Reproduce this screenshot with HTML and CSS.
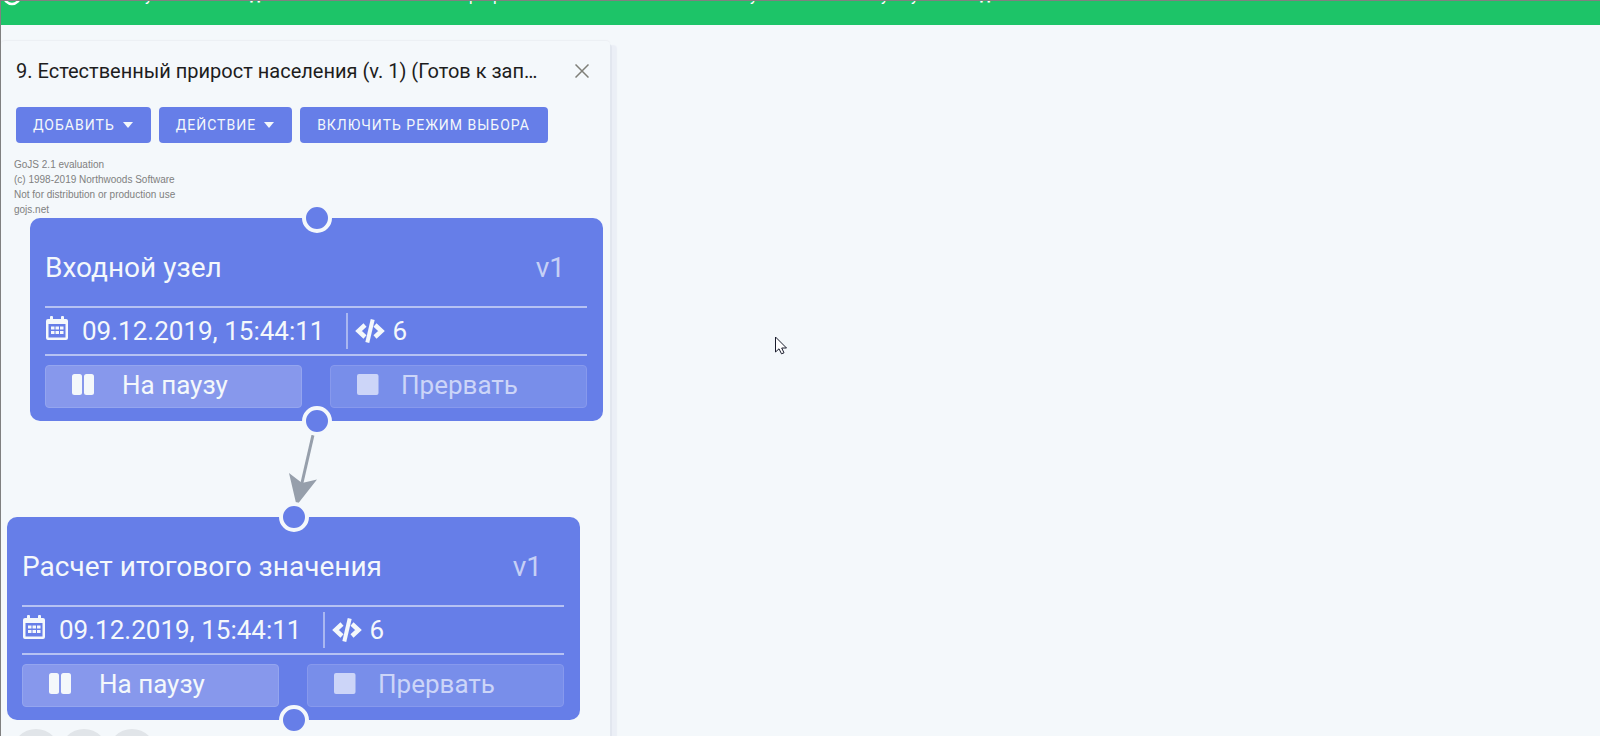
FILE: index.html
```html
<!DOCTYPE html>
<html lang="ru">
<head>
<meta charset="utf-8">
<title>9. Естественный прирост населения</title>
<link rel="stylesheet" href="styles.css">
</head>
<body>
<svg class="defs" width="0" height="0" aria-hidden="true">
  <symbol id="calendar" viewBox="0 0 22 24">
    <path fill="currentColor" fill-rule="evenodd" d="M4 1a1 1 0 0 1 1-1h1a1 1 0 0 1 1 1v2h8V1a1 1 0 0 1 1-1h1a1 1 0 0 1 1 1v2h2a2 2 0 0 1 2 2v17a2 2 0 0 1-2 2H2a2 2 0 0 1-2-2V5a2 2 0 0 1 2-2h2zM2.500 8v13.500h17V8z"/>
    <path fill="currentColor" d="M5 10.500h3.500v3H5zM9.500 10.500H13v3H9.500zM14 10.500h3.500v3H14zM5 15h3.500v3H5zM9.500 15H13v3H9.500zM14 15h3.500v3H14z"/>
  </symbol>
  <symbol id="code" viewBox="0 0 30 24">
    <path fill="none" stroke="currentColor" stroke-width="4.500" d="M10 6l-6.500 6 6.500 6M20 6l6.500 6-6.500 6"/>
    <path fill="none" stroke="currentColor" stroke-width="4" d="M17.700 .5l-5.400 23"/>
  </symbol>
  <symbol id="pause" viewBox="0 0 22 22">
    <rect width="10" height="21" rx="2.500" fill="currentColor"/><rect x="12" width="10" height="21" rx="2.500" fill="currentColor"/>
  </symbol>
  <symbol id="stop" viewBox="0 0 22 22">
    <rect width="21.500" height="21" rx="2" fill="currentColor"/>
  </symbol>
</svg>

<header class="notice">
  <svg class="notice-line" height="24">
    <circle cx="11" cy="-5" r="8" fill="none" stroke="#fff" stroke-width="2.500"/>
    <g>
      <text x="144" y="0">у</text><text x="249" y="-1" class="strong">д</text>
      <text x="464" y="0">ф</text><text x="492" y="0">р</text>
      <text x="749" y="0">у</text><text x="880" y="0">у</text><text x="910" y="0">у</text>
      <text x="979" y="-1" class="strong">д</text>
    </g>
  </svg>
</header>

<main class="workspace">
  <section class="panel">
    <div class="panel-head">
      <h1 class="panel-title">9. Естественный прирост населения (v. 1) (Готов к запуску)</h1>
      <button class="close" type="button" aria-label="×">
        <svg width="14" height="14" viewBox="0 0 14 14"><path d="M.5.5l13 13M13.500.5l-13 13" stroke="#7f7f78" stroke-width="1.500" fill="none"/></svg>
      </button>
    </div>
    <div class="toolbar">
      <button class="btn" type="button">ДОБАВИТЬ <span class="caret"></span></button>
      <button class="btn" type="button">ДЕЙСТВИЕ <span class="caret"></span></button>
      <button class="btn" type="button">ВКЛЮЧИТЬ РЕЖИМ ВЫБОРА</button>
    </div>

    <div class="diagram">
      <p class="watermark">GoJS 2.1 evaluation<br>(c) 1998-2019 Northwoods Software<br>Not for distribution or production use<br>gojs.net</p>

      <svg class="link" width="32" height="72" viewBox="0 0 32 72">
        <path d="M25 0L13.500 50" stroke="#969fab" stroke-width="3" fill="none"/>
        <path d="M1 38l13 10 15-3.500L10.500 68H8z" fill="#969fab"/>
      </svg>

      <article class="node node-input">
        <div class="node-head"><h2>Входной узел</h2><span class="version">v1</span></div>
        <div class="node-info">
          <svg class="ico-calendar"><use href="#calendar"/></svg><time class="date">09.12.2019, 15:44:11</time>
          <span class="count"><svg class="ico-code"><use href="#code"/></svg>6</span>
        </div>
        <div class="node-actions">
          <button class="action" type="button"><svg><use href="#pause"/></svg>На паузу</button>
          <button class="action" type="button" disabled><svg><use href="#stop"/></svg>Прервать</button>
        </div>
        <i class="port port-top"></i><i class="port port-bottom"></i>
      </article>

      <article class="node node-result">
        <div class="node-head"><h2>Расчет итогового значения</h2><span class="version">v1</span></div>
        <div class="node-info">
          <svg class="ico-calendar"><use href="#calendar"/></svg><time class="date">09.12.2019, 15:44:11</time>
          <span class="count"><svg class="ico-code"><use href="#code"/></svg>6</span>
        </div>
        <div class="node-actions">
          <button class="action" type="button"><svg><use href="#pause"/></svg>На паузу</button>
          <button class="action" type="button" disabled><svg><use href="#stop"/></svg>Прервать</button>
        </div>
        <i class="port port-top"></i><i class="port port-bottom"></i>
      </article>

      <div class="tools"><span></span><span></span><span></span></div>
    </div>
  </section>
</main>

<svg class="cursor" width="13" height="20" viewBox="0 0 13 20">
  <path d="M.5 1v15l3.500-3.200 2.500 5 2.500-1-2.300-4.800h4.800z" fill="#fff" stroke="#1a1c2c"/>
</svg>
</body>
</html>
```

FILE: styles.css
```css
* { box-sizing: border-box; }

body {
  margin: 0;
  height: 100vh;
  overflow: hidden;
  display: flex;
  flex-direction: column;
  border-top: 1px solid #808080;
  border-left: 1px solid #808080;
  background: #f4f8fb;
  color: #1d1d1d;
  font-family: Roboto, "Liberation Sans", sans-serif;
}

h1, h2, p { margin: 0; font-weight: 400; }
button { border: 0; padding: 0; font-family: inherit; }
.defs { position: absolute; }

.notice { flex: none; height: 24px; background: #1dc468; overflow: hidden; }
.notice-line { display: block; width: 100%; fill: #fff; font-size: 16px; }
.strong { font-weight: 700; }

.workspace { flex: 1; min-height: 0; display: flex; padding-top: 16px; }

.panel {
  width: 38.1%;
  min-width: 609px;
  display: flex;
  flex-direction: column;
  border-radius: 4px 4px 0 0;
  background: #f4f8fb;
  box-shadow: 0 -1px 1px #eceff3, 2px 3px 0 #e2e6ef, 7px 4px 1px #ebeff6;
}

.panel-head {
  display: flex;
  align-items: center;
  justify-content: space-between;
  gap: 32px;
  height: 60px;
  padding: 0 21px 0 15px;
}
.panel-title {
  flex: 1;
  min-width: 0;
  font-size: 20px;
  line-height: 32px;
  white-space: nowrap;
  overflow: hidden;
  text-overflow: ellipsis;
}
.close { display: flex; background: none; }

.toolbar { display: flex; gap: 8px; padding: 6px 15px 8px; }
.btn {
  display: flex;
  align-items: center;
  gap: 8px;
  height: 36px;
  padding: 0 18px 0 17px;
  border-radius: 4px;
  background: #667ee8;
  color: #f4f8fb;
  font-size: 14px;
  letter-spacing: 1px;
}
.caret { border: 5px solid transparent; border-top: 6px solid; border-bottom: 0; }

.diagram { position: relative; flex: 1; overflow: hidden; }
.watermark {
  padding: 6px 13px;
  color: #808080;
  font: 10px/15px "Liberation Sans", sans-serif;
}
.link { position: absolute; left: 287px; top: 284px; }

.node {
  position: absolute;
  width: 573px;
  height: 203px;
  padding: 0 16px 0 15px;
  border-radius: 10px;
  background: #667ee8;
  color: #f4f8fb;
  font-size: 26px;
}
.node-input { left: 29px; top: 67px; }
.node-result { left: 6px; top: 366px; }

.node-head {
  display: flex;
  align-items: center;
  justify-content: space-between;
  height: 90px;
  padding: 10px 22px 0 0;
  border-bottom: 2px solid #b6c2f3;
  font-size: 28px;
}
.node-head h2 { font-size: inherit; }
.version { color: #c6d0f6; }
.node-info {
  display: flex;
  align-items: center;
  height: 48px;
  border-bottom: 2px solid #b6c2f3;
}
.ico-calendar { width: 22px; height: 24px; margin: 0 14px 6px 1px; }
.ico-code { width: 30px; height: 24px; }
.count {
  display: flex;
  align-items: center;
  gap: 7px;
  height: 36px;
  margin-left: 22px;
  padding-left: 7px;
  border-left: 2px solid #a9b7f1;
}
.node-actions { display: grid; grid-template-columns: 1fr 1fr; gap: 28px; padding-top: 9px; }
.action {
  display: flex;
  align-items: center;
  gap: 28px;
  height: 43px;
  padding: 0 26px 4px;
  border: 1px solid #94a5ef;
  border-radius: 4px;
  background: #8798ec;
  color: #f4f8fb;
  font-size: 26px;
}
.action svg { width: 22px; height: 22px; }
.action:disabled { gap: 22px; border-color: #8799ed; background: #788eea; color: #ccd5f8; }

.port {
  position: absolute;
  left: 50%;
  width: 30px;
  height: 30px;
  margin-left: -15px;
  border: 4px solid #f4f8fb;
  border-radius: 50%;
  background: #667ee8;
}
.port-top { top: -15px; }
.port-bottom { bottom: -15px; }

.tools { position: absolute; left: 11px; bottom: -41px; display: flex; }
.tools span { width: 48px; height: 48px; border-radius: 50%; background: #e1e5e9; }

.cursor { position: absolute; left: 775px; top: 336px; }
```
